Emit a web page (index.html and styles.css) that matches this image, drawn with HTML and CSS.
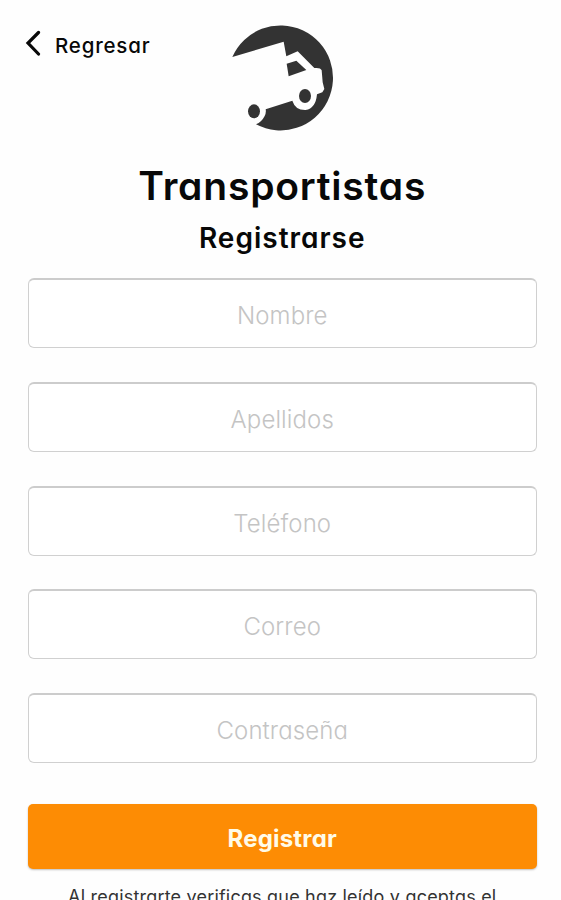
FILE: index.html
```html
<!DOCTYPE html>
<html lang="es">
<head>
  <meta charset="UTF-8" />
  <meta name="viewport" content="width=device-width, initial-scale=1.0"/>
  <title>Transportistas - Registrarse</title>
  <link rel="stylesheet" href="styles.css">
</head>
<body>

  <header>
    <a class="back" href="#">
      <svg class="back-icon" viewBox="0 0 16 26"><path d="M13.500 2.500 L3 13 L13.500 24" /></svg>
      <span>Regresar</span>
    </a>
    <svg class="logo" viewBox="0 0 375 375">
      <path d="M37 126 A157.500 157.500 0 1 1 108 328 Q125 321 134 303 Q139 293 137 283 L217 257 Q226 286 257 285 Q287 281 291 238 L307 232 L313 222 L308 202 L305 166 Q302 157 283 159 L233 109 L199 124 L191 80 Z" />
      <path d="M200 146 L229 137 L259 165 L206 184 Z" />
      <ellipse cx="255" cy="243" rx="18" ry="21" />
      <ellipse cx="102" cy="289" rx="18" ry="21" />
    </svg>
  </header>

  <div class="container">
    <h1>Transportistas</h1>
    <h2>Registrarse</h2>
    <form>
      <input class="field" type="text" placeholder="Nombre">
      <input class="field" type="text" placeholder="Apellidos">
      <input class="field" type="tel" placeholder="Teléfono">
      <input class="field" type="email" placeholder="Correo">
      <input class="field" type="password" placeholder="Contraseña">
      <button class="submit" type="button">Registrar</button>
    </form>
    <p class="terms">Al registrarte verificas que haz leído y aceptas el</p>
  </div>

</body>
</html>
```
FILE: styles.css
```css
* {
  box-sizing: border-box;
}

body {
  font-family: Inter, "Liberation Sans", sans-serif;
  /* single-storey a */
  font-feature-settings: "cv11";
  margin: 0;
  height: 900px;
  overflow: hidden;
  background: #fefefe;
  color: #080808;
}

header {
  display: grid;
  grid-template-columns: 195px 125px 1fr;
  padding: 15px 0 0 25px;
  height: 160px;
}

.back {
  display: flex;
  align-items: center;
  gap: 14px;
  height: 60px;
  color: inherit;
  text-decoration: none;
  font-size: 20.500px;
  font-weight: 500;
  letter-spacing: 0.8px;
}

.back-icon {
  width: 16px;
  height: 26px;
  margin-top: -4px;
  fill: none;
  stroke: #080808;
  stroke-width: 3.2;
  stroke-linecap: round;
}

.logo {
  width: 125px;
  height: 125px;
  fill: #333;
}

.container {
  padding: 0 24.500px 0 28px;
  text-align: center;
}

h1 {
  margin: 0;
  font-size: 39px;
  font-weight: 600;
  line-height: 52px;
  letter-spacing: 0.8px;
}

h2 {
  margin: 7px 0 20px;
  font-size: 28px;
  font-weight: 600;
  line-height: 39px;
  letter-spacing: 1px;
}

form {
  display: flex;
  flex-direction: column;
  gap: 33.750px;
}

.field {
  width: 100%;
  height: 70px;
  padding: 4px 0 0;
  border: 1.500px solid #d0d0d0;
  border-top: 2px solid #ccc;
  border-radius: 6px;
  background: #fff;
  font: inherit;
  font-size: 24px;
  font-weight: 300;
  letter-spacing: 0.1px;
  text-align: center;
}

.field::placeholder {
  color: #c4c4c4;
  opacity: 1;
}

.submit {
  height: 65px;
  margin-top: 7px;
  padding: 4px 0 0;
  border: 0;
  border-radius: 5px;
  background: #fd8c04;
  box-shadow: 0 1px 2px rgba(0,0,0,0.25);
  color: #fffbe8;
  font: inherit;
  font-size: 24px;
  font-weight: 700;
  letter-spacing: 0.2px;
}

.terms {
  margin: 14px 0 0;
  font-size: 18px;
  font-weight: 400;
  line-height: 28px;
  letter-spacing: 0.2px;
  color: #333;
  white-space: nowrap;
}
```
